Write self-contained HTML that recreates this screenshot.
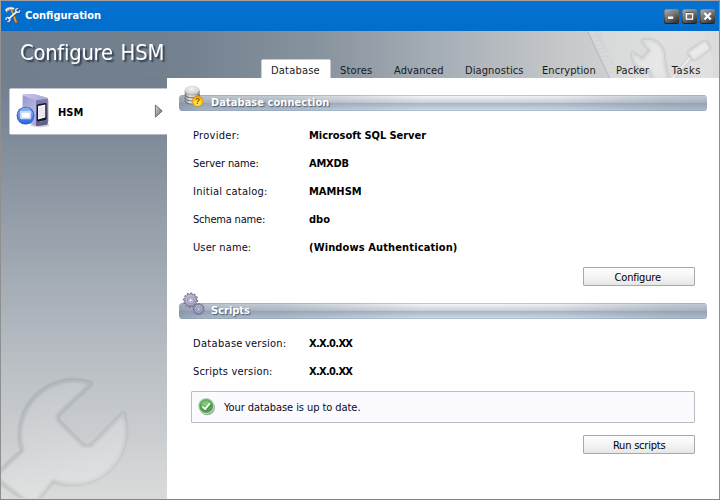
<!DOCTYPE html>
<html>
<head>
<meta charset="utf-8">
<title>Configuration</title>
<style>
html,body{margin:0;padding:0;}
body{width:720px;height:500px;overflow:hidden;background:#fff;font-family:"DejaVu Sans Condensed","DejaVu Sans","Liberation Sans",sans-serif;font-stretch:condensed;font-size:11px;color:#000;}
#win{position:relative;width:720px;height:500px;overflow:hidden;background:#fff;}
.abs{position:absolute;}
#titlebar{left:0;top:0;width:720px;height:31px;background:linear-gradient(180deg,#0571d2 0%,#026dca 100%);}
#title{left:25px;top:9px;color:#fff;font-weight:bold;font-size:11px;line-height:14px;white-space:nowrap;}
#header{left:0;top:31px;width:720px;height:47px;background:linear-gradient(90deg,#707e8e 0%,#73818f 25%,#87939e 44%,#a4acb4 60%,#c5c8ca 78%,#d7d8d8 92%,#dcdcdc 100%);}
#side{left:0;top:78px;width:167px;height:422px;background:linear-gradient(180deg,#717e8e 0%,#9ba4ae 40%,#bcc1c6 70%,#dadbdb 100%);}
#heading{left:20px;top:39.6px;word-spacing:1.6px;will-change:transform;font-family:"DejaVu Sans Condensed","DejaVu Sans","Liberation Sans",sans-serif;font-size:21.8px;letter-spacing:-.1px;line-height:26px;color:#fff;white-space:nowrap;text-shadow:2px 2px 1.5px rgba(38,48,62,.85);}
#content{left:167px;top:78px;width:553px;height:422px;background:#fff;border-top-left-radius:1.5px;}
#tab{left:262px;top:60px;width:68px;height:19px;background:#fff;}
.tabtxt{top:64px;font-size:11px;line-height:14px;color:#1a1a1a;white-space:nowrap;}
#item{left:10px;top:89px;width:158px;height:45px;background:#fff;}
#itemtxt{left:58px;top:106px;font-weight:bold;line-height:14px;}
.bar{left:179px;width:528px;height:16px;border-radius:3.5px;overflow:hidden;background:linear-gradient(180deg,#98a4b2 0,#98a4b2 6.25%,#9eaab8 6.3%,#909dae 50%,#8796a9 50.1%,#93a3b5 93.7%,#8e9dae 93.8%,#8e9dae 100%);}
.bar::after{content:"";position:absolute;left:0;top:0;right:0;bottom:0;background:linear-gradient(180deg,#bfc7cf 0,#bfc7cf 6.25%,#f2f4f6 6.3%,#c9cdd5 50%,#a5b3c3 50.1%,#c9d9eb 93.7%,#b3bfcb 93.8%,#b3bfcb 100%);-webkit-mask-image:linear-gradient(90deg,transparent 0%,rgba(0,0,0,.36) 5%,rgba(0,0,0,.45) 19%,rgba(0,0,0,.76) 34%,#000 46%,#000 61%,rgba(0,0,0,.92) 72%,rgba(0,0,0,.78) 78%,rgba(0,0,0,.62) 85.5%,rgba(0,0,0,.47) 92.5%,rgba(0,0,0,.4) 100%);mask-image:linear-gradient(90deg,transparent 0%,rgba(0,0,0,.36) 5%,rgba(0,0,0,.45) 19%,rgba(0,0,0,.76) 34%,#000 46%,#000 61%,rgba(0,0,0,.92) 72%,rgba(0,0,0,.78) 78%,rgba(0,0,0,.62) 85.5%,rgba(0,0,0,.47) 92.5%,rgba(0,0,0,.4) 100%);}
.bartxt{left:211px;font-weight:bold;color:#fff;font-size:11px;line-height:14px;white-space:nowrap;text-shadow:1px 1px 1px rgba(60,75,95,.8);}
.lbl{left:193px;line-height:14px;white-space:nowrap;color:#0a0a1e;}
.val{left:309px;line-height:14px;white-space:nowrap;font-weight:bold;color:#000;}
.btn{left:583px;width:110px;height:17px;border:1px solid #a8a8a8;border-radius:1px;background:linear-gradient(180deg,#ffffff 0%,#f4f4f4 50%,#e6e6e6 100%);text-align:center;line-height:19px;color:#000;}
#status{left:191px;top:391px;width:502px;height:30px;border:1px solid #bdbdbd;border-radius:1px;background:#fafaff;}
#statustxt{left:224px;top:401px;letter-spacing:-.07px;line-height:14px;white-space:nowrap;color:#0a0a1e;}
svg.layer{position:absolute;left:0;top:0;width:720px;height:500px;overflow:hidden;pointer-events:none;}
</style>
</head>
<body>
<div id="win">
  <div id="titlebar" class="abs"></div>
  <div id="title" class="abs t">Configuration</div>
  <div id="header" class="abs"></div>
  <div id="side" class="abs"></div>
  <svg class="layer" viewBox="0 0 720 500">
  <defs>
    <linearGradient id="wrg" x1="0" y1="0" x2="1" y2="1">
      <stop offset="0" stop-color="#fff" stop-opacity=".02"/>
      <stop offset=".45" stop-color="#fff" stop-opacity=".13"/>
      <stop offset="1" stop-color="#fff" stop-opacity=".3"/>
    </linearGradient>
    <linearGradient id="wrs" gradientUnits="userSpaceOnUse" x1="20" y1="380" x2="125" y2="485"><stop offset="0" stop-color="#6a7079" stop-opacity=".34"/><stop offset=".55" stop-color="#6a7079" stop-opacity=".26"/><stop offset="1" stop-color="#70757c" stop-opacity=".08"/></linearGradient>
    <clipPath id="sideclip"><rect x="1" y="78" width="166" height="420"/></clipPath>
    <clipPath id="headclip"><rect x="1" y="31" width="718" height="47"/></clipPath>
    <filter id="soft" x="-10%" y="-10%" width="120%" height="120%"><feGaussianBlur stdDeviation="0.8"/></filter>
  </defs>
  <!-- sidebar wrench watermark -->
  <g clip-path="url(#sideclip)">
    <path id="wr" d="M91.3 383.2 A54 54 0 0 0 22.4 450.5 L-6 477 L33 506 L52.9 481 A54 54 0 0 0 123.3 413 L91.3 445.7 L83.3 445.7 L57.7 420.1 L57.7 415.3 Z" fill="none" stroke="url(#wrs)" stroke-width="3.5" stroke-linejoin="round" filter="url(#soft)"/>
    <path d="M91.3 383.2 A54 54 0 0 0 22.4 450.5 L-6 477 L33 506 L52.9 481 A54 54 0 0 0 123.3 413 L91.3 445.7 L83.3 445.7 L57.7 420.1 L57.7 415.3 Z" fill="url(#wrg)" stroke="#fff" stroke-opacity=".12" stroke-width="1.2" stroke-linejoin="round"/>
  </g>
  <!-- header tools watermark -->
  <g clip-path="url(#headclip)">
    <path d="M596 31 L700 31 Q704 33 706 38 L713 62 L713 78 L617 78 Z" fill="#fff" fill-opacity=".15"/>
    <path d="M600 31 L690 31 L650 78 L620 78 Z" fill="#fff" fill-opacity=".08"/>
    <path d="M588.5 33 Q589 31 591 31 L595 31 L617.5 78 L609.5 78 Z" fill="#fff" fill-opacity=".22"/>
    <path d="M588 32 L609.5 78" stroke="#7c828a" stroke-opacity=".28" stroke-width="1.2" fill="none"/>
    <path d="M590.5 37 L597.5 36 M592.4 41 L599.4 40 M594.3 45 L601.3 44 M596.2 49 L603.2 48 M598.1 53 L605.1 52 M600 57 L607 56 M601.9 61 L608.9 60 M603.8 65 L610.8 64 M605.7 69 L612.7 68 M607.6 73 L614.6 72" stroke="#9a9ea4" stroke-opacity=".16" stroke-width=".7" fill="none"/>
    <!-- wrench -->
    <path d="M641.9 41.0 A16.0 16.0 0 0 1 663.7 58.0 L668 80 L654 80 L650 70.5 A16.0 16.0 0 0 1 632.4 52.5 L642.2 59.0 L650.0 50.2 Z" fill="none" stroke="#7d828a" stroke-opacity=".3" stroke-width="2.4" stroke-linejoin="round" filter="url(#soft)"/>
    <path d="M641.9 41.0 A16.0 16.0 0 0 1 663.7 58.0 L668 80 L654 80 L650 70.5 A16.0 16.0 0 0 1 632.4 52.5 L642.2 59.0 L650.0 50.2 Z" fill="#fff" fill-opacity=".26" stroke="#fff" stroke-opacity=".25" stroke-width=".8" stroke-linejoin="round"/>
    <!-- screwdriver -->
    <path d="M669.5 79 L689.6 55.6 L692.4 58 L674 79 Z" fill="#fff" fill-opacity=".3" stroke="#8a8f96" stroke-opacity=".3" stroke-width=".8"/>
    <path d="M688.6 54.2 Q687.6 52.6 689 51.4 L702.6 42.2 Q705.6 40.6 707.6 43.4 L709.2 46.2 Q710.4 48.6 708.2 50.2 L695.4 59.4 Q693.6 60.4 692.4 58.8 Z" fill="none" stroke="#7d828a" stroke-opacity=".3" stroke-width="2" filter="url(#soft)"/>
    <path d="M688.6 54.2 Q687.6 52.6 689 51.4 L702.6 42.2 Q705.6 40.6 707.6 43.4 L709.2 46.2 Q710.4 48.6 708.2 50.2 L695.4 59.4 Q693.6 60.4 692.4 58.8 Z" fill="#fff" fill-opacity=".34"/>
  </g>
</svg>

  <div id="heading" class="abs t"><span style="letter-spacing:-.25px">Configure</span> HSM</div>
  <div id="content" class="abs"></div>
  <div id="tab" class="abs"></div>
  <div class="abs" style="left:262px;top:59px;width:68px;height:1px;background:rgba(255,255,255,.55)"></div>
  <div class="abs" style="left:261px;top:60px;width:1px;height:18px;background:rgba(255,255,255,.6)"></div>
  <div class="abs" style="left:330px;top:60px;width:1px;height:18px;background:rgba(255,255,255,.5)"></div>
  <div class="abs tabtxt t" style="left:271px;letter-spacing:.2px">Database</div>
  <div class="abs tabtxt t" style="left:340px;letter-spacing:.15px">Stores</div>
  <div class="abs tabtxt t" style="left:394px;letter-spacing:.1px">Advanced</div>
  <div class="abs tabtxt t" style="left:465px;letter-spacing:.1px">Diagnostics</div>
  <div class="abs tabtxt t" style="left:542px;letter-spacing:.06px">Encryption</div>
  <div class="abs tabtxt t" style="left:616px;letter-spacing:.1px">Packer</div>
  <div class="abs tabtxt t" style="left:671.8px;letter-spacing:.55px">Tasks</div>
  <div id="item" class="abs"></div>
  <div class="abs" style="left:10px;top:134px;width:157px;height:1px;background:rgba(255,255,255,.4)"></div>
  <div class="abs" style="left:10px;top:88px;width:157px;height:1px;background:rgba(255,255,255,.55)"></div>
  <div class="abs" style="left:9px;top:89px;width:1px;height:45px;background:rgba(255,255,255,.55)"></div>
  <div id="itemtxt" class="abs t">HSM</div>

  <div class="abs bar" style="top:95px"></div>
  <div class="abs bartxt t" style="top:96px;letter-spacing:0.05px">Database connection</div>
  <div class="abs lbl t" style="top:129px;letter-spacing:0.3px">Provider:</div>
  <div class="abs val t" style="top:129px;letter-spacing:-0.05px">Microsoft SQL Server</div>
  <div class="abs lbl t" style="top:157px;letter-spacing:-0.1px">Server name:</div>
  <div class="abs val t" style="top:157px;letter-spacing:-0.2px">AMXDB</div>
  <div class="abs lbl t" style="top:185px;letter-spacing:0.27px">Initial catalog:</div>
  <div class="abs val t" style="top:185px">MAMHSM</div>
  <div class="abs lbl t" style="top:213px;letter-spacing:-0.19px">Schema name:</div>
  <div class="abs val t" style="top:213px">dbo</div>
  <div class="abs lbl t" style="top:241px;letter-spacing:0.12px">User name:</div>
  <div class="abs val t" style="top:241px;letter-spacing:0.12px">(Windows Authentication)</div>
  <div class="abs btn t" style="top:267px;letter-spacing:-.18px;text-indent:-2.6px">Configure</div>

  <div class="abs bar" style="top:303px"></div>
  <div class="abs bartxt t" style="top:304px">Scripts</div>
  <div class="abs lbl t" style="top:337px;letter-spacing:.22px;word-spacing:-1.2px"><span style="letter-spacing:.32px">Database</span> version:</div>
  <div class="abs val t" style="top:337px;letter-spacing:-0.67px">X.X.0.XX</div>
  <div class="abs lbl t" style="top:365px;letter-spacing:0.19px">Scripts version:</div>
  <div class="abs val t" style="top:365px;letter-spacing:-0.67px">X.X.0.XX</div>
  <div id="status" class="abs"></div>
  <div id="statustxt" class="abs t">Your database is up to date.</div>
  <div class="abs btn t" style="top:435px;letter-spacing:-.2px;text-indent:.4px">Run scripts</div>

  <svg class="layer" viewBox="0 0 720 500">
  <defs>
    <linearGradient id="wb" x1="0.1" y1="0" x2="0.7" y2="1">
      <stop offset="0" stop-color="#a6a6a6"/><stop offset=".45" stop-color="#787878"/><stop offset="1" stop-color="#3a3a3a"/>
    </linearGradient>
    <linearGradient id="wbs" x1="0" y1="0" x2="0" y2="1">
      <stop offset="0" stop-color="#8a8a8a"/><stop offset="1" stop-color="#1e1e1e"/>
    </linearGradient>
    <linearGradient id="arr" x1="0" y1="0" x2="1" y2="1">
      <stop offset="0" stop-color="#dcdcdc"/><stop offset=".45" stop-color="#a4a4a4"/><stop offset="1" stop-color="#5c5c5c"/>
    </linearGradient>
    <linearGradient id="twl" x1="0" y1="0" x2="1" y2="1">
      <stop offset="0" stop-color="#9696cc"/><stop offset=".5" stop-color="#b6b6e2"/><stop offset="1" stop-color="#9c9ccc"/>
    </linearGradient>
    <linearGradient id="twf" x1="0" y1="0" x2="0" y2="1">
      <stop offset="0" stop-color="#8080ae"/><stop offset="1" stop-color="#5e5e8c"/>
    </linearGradient>
    <linearGradient id="twt" x1="0" y1="0" x2="1" y2="0">
      <stop offset="0" stop-color="#c9c9ea"/><stop offset="1" stop-color="#a6a6d2"/>
    </linearGradient>
    <linearGradient id="bl2" x1="0" y1="0" x2="0" y2="1"><stop offset="0" stop-color="#8fb0f0"/><stop offset=".5" stop-color="#5d8cea"/><stop offset="1" stop-color="#2a66e0"/></linearGradient>
    <radialGradient id="bl" cx=".5" cy=".3" r=".8">
      <stop offset="0" stop-color="#8fb3f2"/><stop offset=".6" stop-color="#4f83e4"/><stop offset="1" stop-color="#2457cc"/>
    </radialGradient>
    <linearGradient id="cyl" x1="0" y1="0" x2="1" y2="0">
      <stop offset="0" stop-color="#8e8e8e"/><stop offset=".35" stop-color="#e6e6e6"/><stop offset=".7" stop-color="#c2c2c2"/><stop offset="1" stop-color="#7c7c7c"/>
    </linearGradient>
    <radialGradient id="cyt" cx=".45" cy=".35" r=".8">
      <stop offset="0" stop-color="#f4f4f4"/><stop offset="1" stop-color="#bdbdbd"/>
    </radialGradient>
    <radialGradient id="qb" cx=".5" cy=".7" r=".75">
      <stop offset="0" stop-color="#fff04a"/><stop offset=".55" stop-color="#ffd21a"/><stop offset="1" stop-color="#f08a05"/>
    </radialGradient>
    <radialGradient id="gr" cx=".45" cy=".4" r=".7">
      <stop offset="0" stop-color="#d6d6e6"/><stop offset=".55" stop-color="#a9a9c6"/><stop offset="1" stop-color="#7e7e9e"/>
    </radialGradient>
    <radialGradient id="gc" cx=".45" cy=".4" r=".7">
      <stop offset="0" stop-color="#76c176"/><stop offset=".8" stop-color="#439c43"/><stop offset="1" stop-color="#6cbc6c"/>
    </radialGradient>
    <filter id="b1" x="-30%" y="-30%" width="160%" height="160%"><feGaussianBlur stdDeviation="0.7"/></filter>
  </defs>

  <!-- title bar icon: hammer + wrench -->
  <g>
    <path d="M11.6 10.4 L16 21.8" stroke="#9a6010" stroke-width="2.7" stroke-linecap="round" fill="none"/>
    <path d="M11.6 10.4 L16 21.8" stroke="#eaa63a" stroke-width="1.5" stroke-linecap="round" fill="none"/>
    <path d="M5 9.5 Q8 7.1 10 7.1 L13 7.2 L14.7 8.7 L13.5 9.8 Q10.4 9.2 8.7 10.2 L6.5 12.2 Z" fill="#f4f4f4" stroke="#8e8e98" stroke-width=".6" stroke-linejoin="round"/>
    <path d="M7.2 11 L7.9 9.6 M9 10 L9.6 8.6" stroke="#77777f" stroke-width=".6" fill="none"/>
    <g transform="translate(.5 .5)" stroke="#2b2f7a" fill="none" stroke-linecap="round">
      <path d="M9 18.6 L16.8 11.8" stroke-width="2"/>
      <path d="M19.7 10.6 A2 2 0 1 1 17.7 8.6" stroke-width="1.6"/>
      <path d="M6 19.5 A2 2 0 1 1 8 21.5" stroke-width="1.6"/>
    </g>
    <g stroke="#dfe8f6" fill="none" stroke-linecap="round">
      <path d="M9 18.6 L16.8 11.8" stroke-width="1.8"/>
      <path d="M19.7 10.6 A2 2 0 1 1 17.7 8.6" stroke-width="1.4"/>
      <path d="M6 19.5 A2 2 0 1 1 8 21.5" stroke-width="1.4"/>
    </g>
    <path d="M9.4 18 L16.4 11.9" stroke="#fff" stroke-width=".9" fill="none"/>
  </g>

  <!-- window buttons -->
  <g>
    <rect x="664" y="9" width="15" height="15" rx="2.5" fill="url(#wbs)"/>
    <rect x="664.8" y="9.8" width="13.4" height="13.2" rx="2" fill="url(#wb)"/>
    <rect x="682" y="9" width="15" height="15" rx="2.5" fill="url(#wbs)"/>
    <rect x="682.8" y="9.8" width="13.4" height="13.2" rx="2" fill="url(#wb)"/>
    <rect x="700" y="9" width="15" height="15" rx="2.5" fill="url(#wbs)"/>
    <rect x="700.8" y="9.8" width="13.4" height="13.2" rx="2" fill="url(#wb)"/>
    <rect x="668" y="16.5" width="5.2" height="2.4" fill="#fff"/>
    <rect x="685.8" y="12.3" width="7.4" height="1.2" fill="#454545"/>
    <rect x="686.45" y="13.75" width="6.1" height="5.4" fill="none" stroke="#fff" stroke-width="1.3"/>
    <path d="M704.4 13 L710.8 19.6 M710.8 13 L704.4 19.6" stroke="#fff" stroke-width="2.2" fill="none"/>
  </g>

  <!-- HSM icon (server tower + blue badge) -->
  <g>
    <ellipse cx="40" cy="125.2" rx="9.5" ry="2" fill="#000" fill-opacity=".18" filter="url(#b1)"/>
    <path d="M47.6 99 L49 100.5 L49 121 L47.6 124 Z" fill="#8a8a96" fill-opacity=".35"/>
    <path d="M22.6 95.4 Q22.6 94.3 24 94.3 L34.6 94.3 L47.2 97.8 Q47.8 98 47.8 99 L47.8 123 Q47.8 124.4 46.6 124.7 L37.6 126 Q36 126.2 35 125.6 L23.6 121.4 Q22.6 121 22.6 120 Z" fill="url(#twl)"/>
    <path d="M22.6 95.4 Q22.6 94.3 24 94.3 L34.6 94.3 L47.2 97.8 L36 100.2 Z" fill="url(#twt)"/>
    <path d="M36 100.2 L47.8 98.4 L47.8 123 Q47.8 124.4 46.6 124.7 L37.6 126 Q36 126.2 36 125 Z" fill="url(#twf)"/>
    <path d="M36.8 105.6 Q36.8 104.4 38 104.2 L45.4 103 Q46.5 102.9 46.5 104 L46.5 118.6 Q46.5 119.6 45.5 119.9 L38 121.6 Q36.8 121.8 36.8 120.6 Z" fill="#15151f"/>
    <path d="M38 106 L45.3 104.6 L45.3 117.4 L38 119.4 Z" fill="#f3f3f8"/>
    <path d="M38.6 109 L44.8 107.8 M38.6 111.4 L44.8 110.2 M38.6 113.8 L44.8 112.8 M38.6 116.2 L44.8 115.2" stroke="#c9c9d6" stroke-width=".6" fill="none"/>
    <circle cx="41.4" cy="121.8" r=".6" fill="#54d06a"/>
    <circle cx="25.5" cy="115.6" r="8.9" fill="#2a5bd0"/>
    <circle cx="25.5" cy="115.6" r="8" fill="url(#bl2)"/>
    <rect x="19.9" y="110.8" width="11.3" height="8.4" rx="1.2" fill="#c9dbfc" fill-opacity=".92"/>
    <rect x="21.6" y="112.8" width="8" height="4.9" fill="#ffffff"/>
  </g>

  <!-- arrow -->
  <path d="M155.4 105 L162.2 111 L155.4 117.2 Z" fill="url(#arr)" stroke="#6e6e6e" stroke-width="1" stroke-linejoin="round"/>

  <!-- database icon with question badge -->
  <g>
    <path d="M184.8 90.2 L184.8 100.6 A7.4 3.6 0 0 0 199.6 100.6 L199.6 90.2 Z" fill="url(#cyl)"/>
    <path d="M184.8 94.4 A7.4 3.4 0 0 0 199.6 94.4 M184.8 97.6 A7.4 3.4 0 0 0 199.6 97.6 M184.8 100.6 A7.4 3.4 0 0 0 199.6 100.6" stroke="#585858" stroke-opacity=".8" stroke-width="1" fill="none"/>
    <ellipse cx="192.2" cy="90.3" rx="7.5" ry="4.6" fill="url(#cyt)"/>
    <path d="M184.8 91 A7.4 4 0 0 0 199.6 91" stroke="#7a7a7a" stroke-opacity=".55" stroke-width=".8" fill="none"/>
    <circle cx="197.6" cy="101.2" r="5.5" fill="#e88a0a"/>
    <circle cx="197.6" cy="101.2" r="4.9" fill="url(#qb)"/>
    <text x="197.6" y="104.3" font-family="Liberation Sans, sans-serif" font-weight="bold" font-size="8.5" fill="#8a5608" text-anchor="middle">?</text>
  </g>

  <!-- gears -->
  <g>
    <path d="M196.49,299.93 L197.90,300.28 L197.77,301.57 L196.32,301.64 L195.84,302.91 L196.88,303.92 L196.12,304.97 L194.84,304.31 L193.78,305.17 L194.18,306.56 L193.00,307.10 L192.22,305.87 L190.87,306.09 L190.52,307.50 L189.23,307.37 L189.16,305.92 L187.89,305.44 L186.88,306.48 L185.83,305.72 L186.49,304.44 L185.63,303.38 L184.24,303.78 L183.70,302.60 L184.93,301.82 L184.71,300.47 L183.30,300.12 L183.43,298.83 L184.88,298.76 L185.36,297.49 L184.32,296.48 L185.08,295.43 L186.36,296.09 L187.42,295.23 L187.02,293.84 L188.20,293.30 L188.98,294.53 L190.33,294.31 L190.68,292.90 L191.97,293.03 L192.04,294.48 L193.31,294.96 L194.32,293.92 L195.37,294.68 L194.71,295.96 L195.57,297.02 L196.96,296.62 L197.50,297.80 L196.27,298.58Z" fill="url(#gr)" stroke="#666688" stroke-width=".8" stroke-linejoin="round"/>
    <circle cx="190.6" cy="300.2" r="3.4" fill="#c6c6e2" stroke="#8a8aae" stroke-width=".8"/>
    <circle cx="190.6" cy="300.2" r="1.6" fill="#fff" stroke="#77779a" stroke-width=".6"/>
    <path d="M203.08,309.50 L204.23,309.95 L203.97,311.01 L202.74,310.85 L202.17,311.80 L202.90,312.81 L202.10,313.55 L201.15,312.76 L200.16,313.25 L200.22,314.49 L199.15,314.68 L198.78,313.50 L197.68,313.38 L197.07,314.46 L196.06,314.04 L196.39,312.85 L195.53,312.15 L194.43,312.73 L193.81,311.83 L194.73,311.00 L194.38,309.95 L193.15,309.84 L193.11,308.75 L194.33,308.56 L194.61,307.48 L193.63,306.72 L194.18,305.79 L195.32,306.28 L196.13,305.53 L195.72,304.36 L196.69,303.87 L197.38,304.90 L198.47,304.71 L198.75,303.50 L199.84,303.62 L199.86,304.86 L200.88,305.28 L201.77,304.42 L202.62,305.10 L201.97,306.16 L202.60,307.07 L203.82,306.82 L204.16,307.86 L203.04,308.39Z" fill="url(#gr)" stroke="#666688" stroke-width=".8" stroke-linejoin="round"/>
    <circle cx="198.7" cy="309.1" r="2.5" fill="#c0c0dc" stroke="#8686aa" stroke-width=".8"/>
    <circle cx="198.7" cy="309.1" r="1.2" fill="#f4f4fa" stroke="#77779a" stroke-width=".6"/>
  </g>

  <!-- green check -->
  <g>
    <circle cx="207.2" cy="407.4" r="7.8" fill="#000" fill-opacity=".35" filter="url(#b1)"/>
    <circle cx="206.2" cy="406.1" r="8.1" fill="#b4e1b4"/>
    <circle cx="206.2" cy="406.1" r="7" fill="#5aad5a"/>
    <circle cx="206.2" cy="406.1" r="6.2" fill="url(#gc)"/>
    <path d="M200.6 404.4 A6 6 0 0 1 211.8 404.4 Q206.2 406.6 200.6 404.4Z" fill="#fff" fill-opacity=".2"/>
    <path d="M202.9 406.9 L205.1 409.2 L209.4 403.9" stroke="#2f6e2f" stroke-opacity=".5" stroke-width="2.6" fill="none" stroke-linecap="round" stroke-linejoin="round" transform="translate(.4 .5)"/>
    <path d="M202.9 406.9 L205.1 409.2 L209.4 403.9" stroke="#fff" stroke-width="1.9" fill="none" stroke-linecap="round" stroke-linejoin="round"/>
  </g>
</svg>

  <div class="abs" style="left:0;top:0;width:720px;height:1px;background:#a59d99"></div>
  <div class="abs" style="left:0;top:0;width:1px;height:500px;background:linear-gradient(180deg,#a59d99 0,#a59d99 31px,#8f8f8f 32px,#8f8f8f 100%)"></div>
  <div class="abs" style="left:719px;top:0;width:1px;height:500px;background:#8c8c8c"></div>
  <div class="abs" style="left:0;top:499px;width:720px;height:1px;background:#858585"></div>
</div>
</body>
</html>
